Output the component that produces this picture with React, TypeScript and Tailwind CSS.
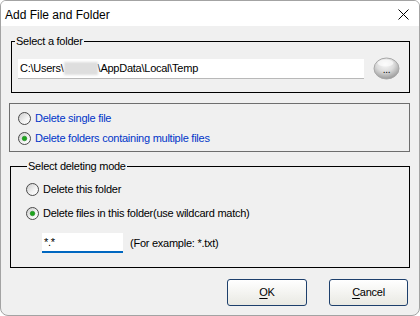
import React from "react";

function Radio({ checked }: { checked?: boolean }) {
  return (
    <svg width="13" height="13" viewBox="0 0 13 13" className="shrink-0">
      <defs>
        <linearGradient id="rg" x1="0" y1="0" x2="1" y2="1">
          <stop offset="0" stopColor="#c9c9c9" />
          <stop offset="0.6" stopColor="#f4f4f4" />
          <stop offset="1" stopColor="#ffffff" />
        </linearGradient>
      </defs>
      <circle cx="6.5" cy="6.5" r="6" fill="url(#rg)" stroke="#4b4b4b" strokeWidth="1" />
      {checked && <circle cx="6.5" cy="6.5" r="2.3" fill="#1ea51e" stroke="#0d7a0d" strokeWidth="0.5" />}
    </svg>
  );
}

function BrowseButton() {
  return (
    <div className="relative w-[27px] h-[23px] shrink-0">
      <svg width="27" height="23" viewBox="0 0 27 23">
        <defs>
          <radialGradient id="bg" cx="0.45" cy="0.3" r="0.7">
            <stop offset="0" stopColor="#f7f7f7" />
            <stop offset="0.5" stopColor="#dcdcdc" />
            <stop offset="1" stopColor="#9a9a9a" />
          </radialGradient>
        </defs>
        <ellipse cx="13.5" cy="11.5" rx="12.5" ry="10.5" fill="url(#bg)" stroke="#a8a8a8" strokeWidth="1" />
        <ellipse cx="12.5" cy="6" rx="8" ry="3.5" fill="#ffffff" opacity="0.6" />
      </svg>
      <span className="absolute left-0 right-0 top-[8px] text-center text-[10px] leading-[10px] text-black font-['Liberation_Sans',sans-serif]">
        ...
      </span>
    </div>
  );
}

export default function App() {
  return (
    <div className="w-[420px] h-[316px] bg-[#f0f0f0] border border-[#a3a3a3] rounded-t-[6px] rounded-b-[8px] overflow-hidden flex flex-col font-['Liberation_Sans',Arial,sans-serif] text-[11px] tracking-[-0.25px] text-black">
      {/* title bar */}
      <div className="h-[25px] bg-white flex items-center justify-between pl-[4px] pr-[10px] shrink-0">
        <span className="text-[12px] tracking-normal leading-[14px] mt-[2px]">Add File and Folder</span>
        <svg width="11" height="11" viewBox="0 0 11 11" className="mt-[1px]">
          <path d="M0.5 0.5 L10.5 10.5 M10.5 0.5 L0.5 10.5" stroke="#000" strokeWidth="1" />
        </svg>
      </div>

      {/* select a folder */}
      <fieldset className="ml-[10px] mt-[8px] w-[399px] h-[59px] border border-black px-[6px] pt-[10px]">
        <legend className="-ml-[3px] px-[1px] leading-[14px]">Select a folder</legend>
        <div className="flex items-center">
          <div className="w-[346px] h-[20px] bg-white border-b border-[#b8b8b8] flex items-center pl-[2px]">
            <span>C:\Users\</span>
            <span className="inline-block w-[34px] h-[13px] bg-[#dedede] blur-[1px]" />
            <span>\AppData\Local\Temp</span>
          </div>
          <div className="ml-[9px] -mt-[1px]">
            <BrowseButton />
          </div>
        </div>
      </fieldset>

      {/* file/folder choice */}
      <div className="ml-[8px] mt-[10px] w-[401px] h-[49px] border border-[#6e6e6e] pl-[8px] pt-[6px] flex flex-col gap-[4px] text-[#0035c8]">
        <div className="h-[16px] flex items-center gap-[4px]">
          <Radio />
          <span>Delete single file</span>
        </div>
        <div className="h-[16px] flex items-center gap-[4px]">
          <Radio checked />
          <span>Delete folders containing multiple files</span>
        </div>
      </div>

      {/* deleting mode */}
      <fieldset className="ml-[9px] mt-[7px] w-[400px] h-[109px] border border-black pl-[15px] pt-[8px]">
        <legend className="ml-[1px] px-[1px] leading-[14px]">Select deleting mode</legend>
        <div className="flex flex-col">
          <div className="h-[16px] flex items-center gap-[4px]">
            <Radio />
            <span>Delete this folder</span>
          </div>
          <div className="h-[16px] mt-[8px] flex items-center gap-[4px]">
            <Radio checked />
            <span>Delete files in this folder(use wildcard match)</span>
          </div>
          <div className="mt-[12px] ml-[16px] flex items-center">
            <div className="w-[81px] h-[20px] bg-white border-b-2 border-[#0067c0] pl-[2px] leading-[18px]">*.*</div>
            <span className="ml-[7px]">(For example: *.txt)</span>
          </div>
        </div>
      </fieldset>

      {/* buttons */}
      <div className="mt-[11px] ml-[226px] flex gap-[22px]">
        <button className="w-[80px] h-[27px] rounded-[3px] border border-[#1d3f6c] bg-gradient-to-b from-white to-[#e9e9e3] text-[11px]">
          <span className="underline underline-offset-2">O</span>K
        </button>
        <button className="w-[79px] h-[27px] rounded-[3px] border border-[#1d3f6c] bg-gradient-to-b from-white to-[#e9e9e3] text-[11px]">
          <span className="underline underline-offset-2">C</span>ancel
        </button>
      </div>
    </div>
  );
}
